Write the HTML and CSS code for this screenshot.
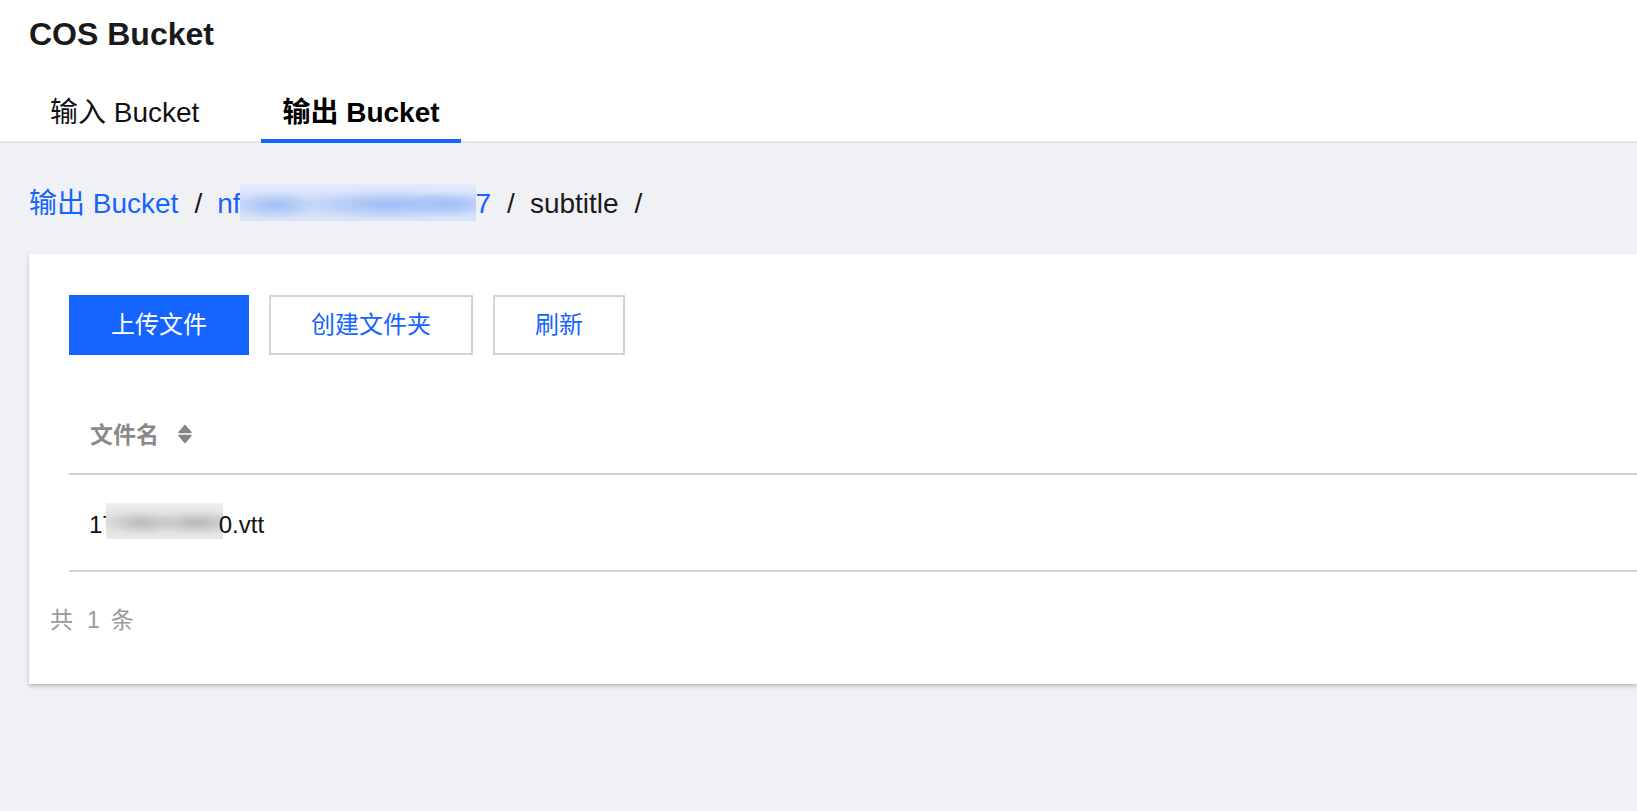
FILE: index.html
```html
<!DOCTYPE html>
<html lang="zh-CN">
<head>
<meta charset="utf-8">
<title>COS Bucket</title>
<link rel="stylesheet" href="styles.css">
</head>
<body>
<header class="header">
  <h1 class="title">COS Bucket</h1>
  <nav class="tabs">
    <a class="tab">输入 Bucket</a>
    <a class="tab tab-active">输出 Bucket</a>
  </nav>
</header>
<main class="main">
  <div class="crumbs"><a class="crumb-link">输出 Bucket</a><span class="sep">/</span><a class="crumb-link">nf<span class="redact redact-blue" aria-hidden="true"></span>7</a><span class="sep">/</span><span class="crumb-current">subtitle</span><span class="sep">/</span></div>
  <section class="card">
    <div class="toolbar">
      <button class="btn btn-primary">上传文件</button>
      <button class="btn">创建文件夹</button>
      <button class="btn">刷新</button>
    </div>
    <div class="table">
      <div class="thead">
        <div class="th">文件名
          <svg class="sort" viewBox="0 0 16 20" width="16" height="20" aria-hidden="true">
            <path d="M8 1.5 L14 8.5 L2 8.5 Z" fill="#868686" stroke="#868686" stroke-width="1.5" stroke-linejoin="round"/>
            <path d="M2 11.5 L14 11.5 L8 18.5 Z" fill="#868686" stroke="#868686" stroke-width="1.5" stroke-linejoin="round"/>
          </svg>
        </div>
      </div>
      <div class="tr">
        <div class="td">17<span class="redact redact-gray" aria-hidden="true"></span><span class="after">0.vtt</span></div>
      </div>
    </div>
    <div class="footer">共<span class="num">1</span>条</div>
  </section>
</main>
</body>
</html>
```

FILE: styles.css
```css
html, body {
  margin: 0;
  padding: 0;
  overflow: hidden;
}

body {
  background: #f0f1f5;
  font-family: "Liberation Sans", "Noto Sans CJK SC", sans-serif;
  color: #1b1b1b;
  height: 811px;
}

.header {
  background: #ffffff;
  padding: 14px 29px 0;
  border-bottom: 2px solid #e6e8ee;
}

.title {
  margin: 0;
  font-size: 32px;
  line-height: 40px;
  font-weight: 700;
  color: #1a1a1a;
}

.tabs {
  display: flex;
  gap: 41px;
  margin-top: 39px;
}

.tab {
  display: block;
  padding: 0 21px 6px;
  font-size: 28px;
  line-height: 40px;
  color: #111111;
  border-bottom: 4px solid transparent;
  margin-bottom: -2px;
}

.tab-active {
  font-weight: 700;
  color: #000000;
  border-bottom-color: #1664ff;
}

.main {
  padding: 41px 0 0 29px;
}

.crumbs {
  font-size: 28px;
  line-height: 40px;
  height: 40px;
  white-space: nowrap;
}

.crumb-link {
  color: #1664ff;
}

.crumb-current {
  color: #1a1a1a;
}

.sep {
  color: #1a1a1a;
  padding: 0 15px 0 16px;
}

.redact {
  display: inline-block;
}

.redact-blue {
  width: 236px;
  height: 37px;
  vertical-align: -4px;
  margin: -4px 0 -4px -1px;
  background:
    radial-gradient(ellipse 44px 14px at 36px 58%, #a3bff5 0%, rgba(163,191,245,0) 100%),
    radial-gradient(ellipse 90px 15px at 150px 56%, #a0bdf5 0%, rgba(160,189,245,0) 100%),
    radial-gradient(ellipse 50px 13px at 210px 55%, #a6c1f6 0%, rgba(166,193,246,0) 100%),
    linear-gradient(180deg, #e4ebfb 0%, #ccdcf9 50%, #d9e4fa 100%);
}

.card {
  margin-top: 30px;
  background: #ffffff;
  box-shadow: 0 2px 4px rgba(54, 58, 80, 0.3);
  padding: 41px 0 48px;
}

.toolbar {
  display: flex;
  gap: 20px;
  margin-left: 40px;
}

.btn {
  box-sizing: border-box;
  height: 60px;
  padding: 0 40px;
  border: 2px solid #cfd5de;
  background: #ffffff;
  color: #1664ff;
  font-family: "Liberation Sans", "Noto Sans CJK SC", sans-serif;
  font-size: 24px;
  line-height: 32px;
}

.btn-primary {
  background: #1664ff;
  border-color: #1664ff;
  color: #ffffff;
}

.table {
  margin-top: 41px;
  margin-left: 40px;
}

.thead {
  border-bottom: 2px solid #cbd0dc;
}

.th {
  display: flex;
  align-items: center;
  gap: 18px;
  padding: 23px 21px 22px;
  font-size: 23px;
  line-height: 32px;
  font-weight: 700;
  color: #8a8a8a;
}

.sort {
  display: block;
  margin-top: -3px;
}

.tr {
  border-bottom: 2px solid #cbd0dc;
}

.td {
  padding: 34px 20px 29px;
  font-size: 24px;
  line-height: 32px;
  color: #111111;
  white-space: nowrap;
}

.redact-gray {
  width: 117px;
  height: 36px;
  vertical-align: -6px;
  margin: -6px 0 0 -10px;
  background:
    radial-gradient(ellipse 34px 12px at 36px 55%, #bcbcbc 0%, rgba(188,188,188,0) 100%),
    radial-gradient(ellipse 44px 12px at 90px 55%, #bababa 0%, rgba(186,186,186,0) 100%),
    linear-gradient(180deg, #efefef 0%, #dadada 50%, #e8e8e8 100%);
}

.after {
  margin-left: -4px;
}

.footer {
  margin-top: 32px;
  padding-left: 21px;
  font-size: 23px;
  line-height: 32px;
  color: #9a9a9a;
}

.num {
  margin: 0 11px 0 14px;
}
```
